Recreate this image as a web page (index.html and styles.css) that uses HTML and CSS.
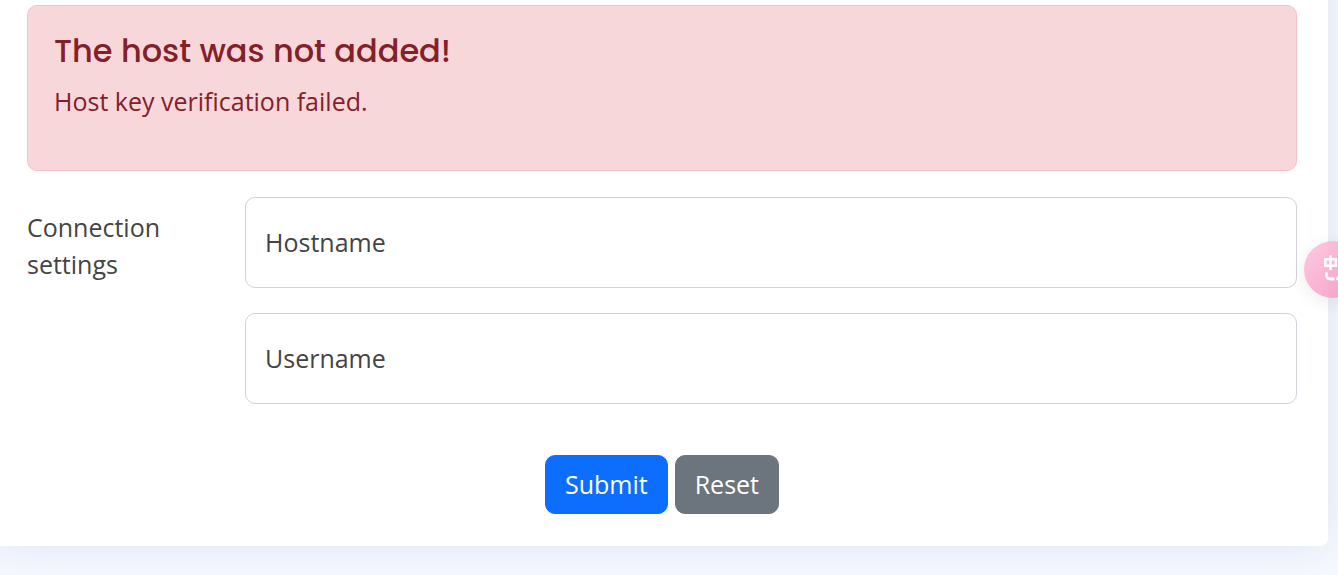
FILE: index.html
```html
<!DOCTYPE html>
<html lang="en">
<head>
<meta charset="utf-8">
<meta name="viewport" content="width=device-width, initial-scale=1">
<title>Add host</title>
<link rel="stylesheet" href="styles.css">
</head>
<body>
<main class="card">
  <div class="alert" role="alert">
    <h4 class="alert-heading">The host was not added!</h4>
    <p class="alert-text">Host key verification failed.</p>
  </div>
  <form class="host-form">
    <div class="settings" role="group" aria-labelledby="settings-title">
      <div class="settings-title" id="settings-title">Connection settings</div>
      <div class="fields">
        <div class="field">
          <input class="field-input" id="hostname" type="text">
          <label class="field-label" for="hostname">Hostname</label>
        </div>
        <div class="field">
          <input class="field-input" id="username" type="text">
          <label class="field-label" for="username">Username</label>
        </div>
      </div>
    </div>
    <div class="actions">
      <button class="btn btn-primary" type="submit">Submit</button>
      <button class="btn btn-secondary" type="reset">Reset</button>
    </div>
  </form>
</main>
<button class="translate" type="button" aria-label="Translate">
  <svg class="translate-icon" width="30" height="30" viewBox="0 0 30 30" fill="none" stroke="#fff" stroke-width="2.6" aria-hidden="true">
    <path d="M2.3 4.3h10.4v6.4H2.3zM7.5 .5v14.5"/>
    <path d="M3.5 17.5v2.2q0 4.3 4.3 4.3h3.7" stroke-width="2.8"/>
    <path d="M14 25l5-11 5 11M16 22h6M18 4h4q4 0 4 4v3"/>
  </svg>
</button>
</body>
</html>
```
FILE: styles.css
```css
*, *::before, *::after {
  box-sizing: border-box;
}

body {
  margin: 0;
  min-height: 100vh;
  padding-right: 10px;
  overflow: hidden;
  background: #f6f9ff;
  color: #444;
  font: 25px/37px "Open Sans", "Noto Sans", sans-serif;
}

.card {
  margin: -60px 0 0 -6px;
  padding: 65px 31px 32px 33px;
  border-radius: 8px;
  background: #fff;
  box-shadow: 0 0 48px rgba(1, 41, 112, 0.1);
}

.alert {
  margin-bottom: 26px;
  padding: 26px 26px 50px;
  border: 1px solid #f5c2c7;
  border-radius: 10px;
  background: #f8d7da;
  color: #842029;
}

.alert-heading {
  margin: 0 0 14px;
  font: 500 32px/37px Poppins, Inter, sans-serif;
  font-feature-settings: "cv11";
}

.alert-text {
  margin: 0;
}

.settings {
  display: grid;
  grid-template-columns: 192px 1fr;
  column-gap: 26px;
}

.settings-title {
  padding-top: 12px;
}

.fields {
  display: grid;
  gap: 25px;
}

.field {
  position: relative;
}

.field-input {
  display: block;
  width: 100%;
  height: 91px;
  padding: 26px 19px;
  border: 1px solid #ced4da;
  border-radius: 10px;
  background: #fff;
  color: #212529;
  font: inherit;
}

.field-label {
  position: absolute;
  top: 27px;
  left: 20px;
  pointer-events: none;
}

.field-input:focus + .field-label {
  opacity: 0.65;
}

.actions {
  display: flex;
  justify-content: center;
  gap: 7px;
  margin-top: 51px;
}

.btn {
  padding: 10px 19px;
  border: 1px solid;
  border-radius: 10px;
  color: #fff;
  font: inherit;
  cursor: pointer;
}

.btn-primary {
  border-color: #0d6efd;
  background: #0d6efd;
}

.btn-secondary {
  border-color: #6c757d;
  background: #6c757d;
}

.translate {
  position: fixed;
  top: 241px;
  right: -24px;
  width: 58px;
  height: 57px;
  padding: 0 0 0 19px;
  border: 0;
  border-radius: 50%;
  background: linear-gradient(135deg, #ffc0dc, #f48fbc);
  box-shadow: 0 4px 20px rgba(0, 0, 0, 0.1);
  opacity: 0.85;
}

.translate-icon {
  display: block;
}
```
